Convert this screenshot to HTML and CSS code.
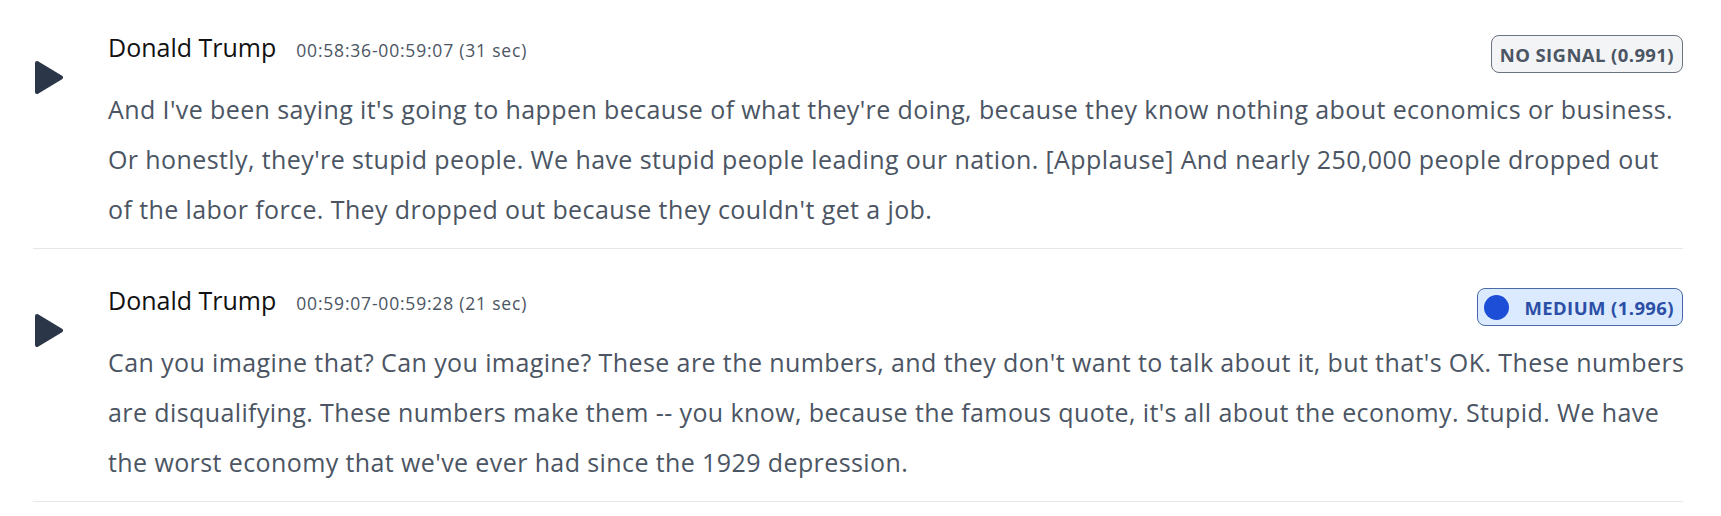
FILE: index.html
```html
<!DOCTYPE html>
<html lang="en">
<head>
<meta charset="utf-8">
<title>Transcript</title>
<link rel="stylesheet" href="styles.css">
</head>
<body>
<div class="list">
  <div class="item">
    <button class="play" aria-label="Play">
      <svg width="28" height="33" viewBox="0 0 28 33"><path d="M2 2 L26 16.5 L2 31 Z"/></svg>
    </button>
    <div class="content">
      <div class="head">
        <span class="name">Donald Trump</span>
        <span class="time">00:58:36-00:59:07 (31 sec)</span>
        <span class="badge badge-none">NO SIGNAL (0.991)</span>
      </div>
      <p class="text">And I've been saying it's going to happen because of what they're doing, because they know nothing about economics or business.<br>Or honestly, they're stupid people. We have stupid people leading our nation. [Applause] And nearly 250,000 people dropped out<br>of the labor force. They dropped out because they couldn't get a job.</p>
    </div>
  </div>
  <div class="item">
    <button class="play" aria-label="Play">
      <svg width="28" height="33" viewBox="0 0 28 33"><path d="M2 2 L26 16.5 L2 31 Z"/></svg>
    </button>
    <div class="content">
      <div class="head">
        <span class="name">Donald Trump</span>
        <span class="time">00:59:07-00:59:28 (21 sec)</span>
        <span class="badge badge-medium"><span class="dot"></span>MEDIUM (1.996)</span>
      </div>
      <p class="text">Can you imagine that? Can you imagine? These are the numbers, and they don't want to talk about it, but that's OK. These numbers<br>are disqualifying. These numbers make them -- you know, because the famous quote, it's all about the economy. Stupid. We have<br>the worst economy that we've ever had since the 1929 depression.</p>
    </div>
  </div>
</div>
</body>
</html>
```
FILE: styles.css
```css
html, body {
  margin: 0;
  padding: 0;
  background: #ffffff;
}
body {
  font-family: "Open Sans", "Noto Sans", sans-serif;
}
.list {
  padding: 0 38px 0 33px;
  margin-top: -4px;
}
.item {
  display: flex;
  align-items: flex-start;
  border-bottom: 1px solid #e5e7eb;
  padding: 34px 0 14px 0;
}
.play {
  flex: none;
  width: 28px;
  height: 33px;
  margin: 31px 0 0 2px;
  padding: 0;
  border: 0;
  background: none;
  cursor: pointer;
  display: block;
}
.play svg {
  display: block;
}
.play path {
  fill: #2b3648;
  stroke: #2b3648;
  stroke-width: 4;
  stroke-linejoin: round;
}
.content {
  flex: 1;
  margin-left: 45px;
  min-width: 0;
}
.head {
  display: flex;
  align-items: baseline;
}
.name {
  font-size: 25px;
  line-height: 34px;
  color: #111111;
}
.time {
  font-size: 17.5px;
  letter-spacing: 0.8px;
  color: #4b5563;
  margin-left: 20px;
}
.badge {
  margin-left: auto;
  align-self: flex-start;
  margin-top: 5px;
  height: 38px;
  box-sizing: border-box;
  display: flex;
  align-items: center;
  padding: 0 8px;
  border-radius: 8px;
  font-size: 18.5px;
  letter-spacing: 0.4px;
  font-weight: 700;
  white-space: nowrap;
}
.badge-none {
  background: #f3f4f6;
  border: 1px solid #6b7280;
  color: #4b5563;
}
.badge-medium {
  background: #dbeafe;
  border: 1px solid #4a6aa8;
  color: #2b4fa6;
  padding-left: 6px;
}
.dot {
  width: 25px;
  height: 25px;
  border-radius: 50%;
  background: #1d4ed8;
  margin-right: 15px;
}
.text {
  margin: 11px 0 0 0;
  font-size: 25px;
  letter-spacing: 0.4px;
  line-height: 50px;
  white-space: nowrap;
  color: #4b5563;
}
```
